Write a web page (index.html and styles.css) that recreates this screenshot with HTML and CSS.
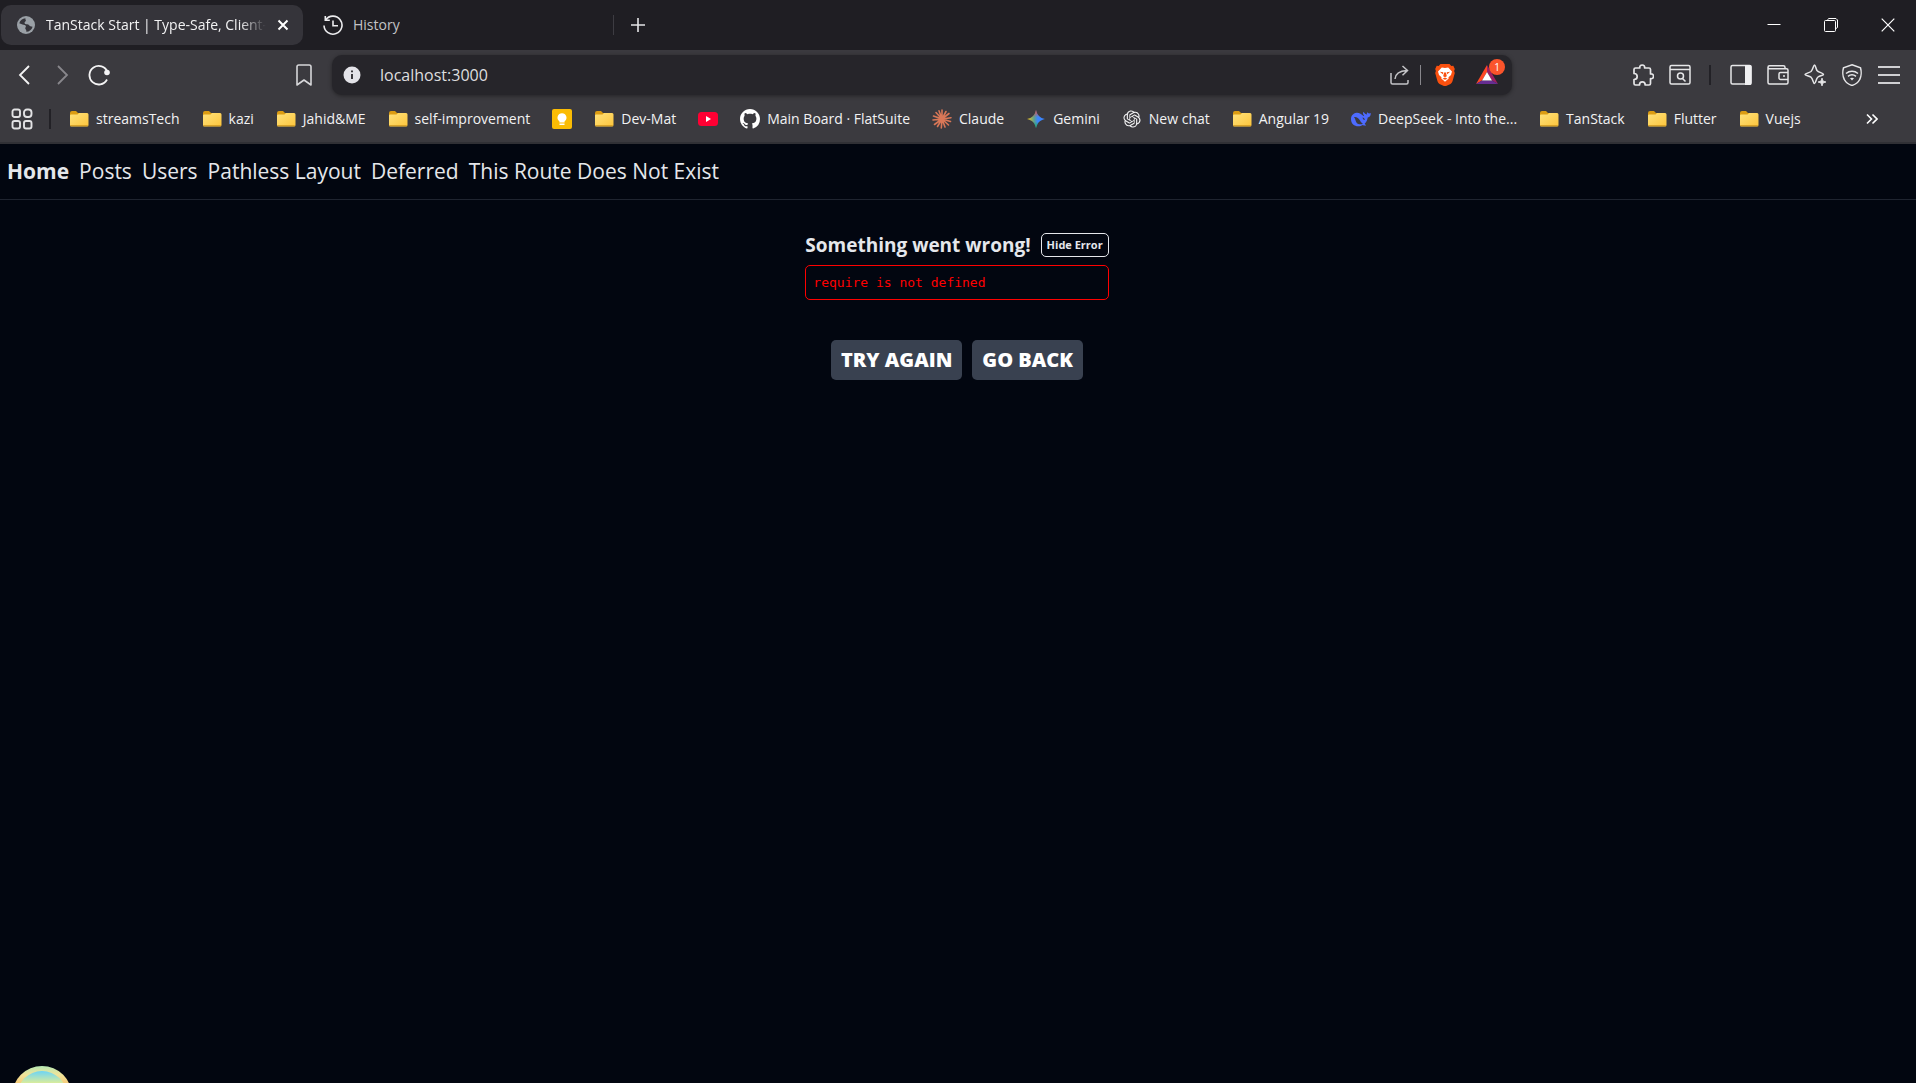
FILE: index.html
```html
<!DOCTYPE html>
<html lang="en">
<head>
<meta charset="utf-8">
<meta name="viewport" content="width=device-width, initial-scale=1">
<title>TanStack Start | Type-Safe, Client</title>
<link rel="stylesheet" href="styles.css">
</head>
<body>
<svg class="defs" aria-hidden="true">
  <defs>
    <linearGradient id="folder-front" x1="0" y1="0" x2="1" y2="1"><stop offset="0" stop-color="#ffe27c"/><stop offset="1" stop-color="#fcc53c"/></linearGradient>
    <linearGradient id="gem-a" x1="0" y1="0.5" x2="1" y2="0.5"><stop offset="0" stop-color="#f9c513"/><stop offset="0.4" stop-color="#5d9f8f"/><stop offset="0.6" stop-color="#3b86ff"/><stop offset="1" stop-color="#3b86ff"/></linearGradient>
    <linearGradient id="gem-b" x1="0.5" y1="0" x2="0.5" y2="1"><stop offset="0" stop-color="#f5483c"/><stop offset="0.4" stop-color="#f5483c" stop-opacity="0"/><stop offset="0.65" stop-color="#13b35a" stop-opacity="0"/><stop offset="1" stop-color="#13b35a"/></linearGradient>
    <symbol id="folder" viewBox="0 0 20 20">
      <path d="M1 4a2 2 0 0 1 2-2h4l2 2h8a2 2 0 0 1 2 2v5H1z" fill="#dc9c12"/>
      <path d="M1 6.500a1 1 0 0 1 1-1h6.500l1.500-1.500h8a1.500 1.500 0 0 1 1.500 1.500V16a1.500 1.500 0 0 1-1.500 1.500H2.500A1.500 1.500 0 0 1 1 16z" fill="url(#folder-front)"/>
      <path d="M1.200 16.700h17.600" stroke="#cf981f" stroke-width="1"/>
    </symbol>
  </defs>
</svg>

<header class="browser">
  <div class="tabs">
    <div class="tab tab-active">
      <svg class="i18" viewBox="0 0 18 18"><circle cx="9" cy="9" r="9" fill="#9aa0a6"/><path d="M8.500 2.200C5.500 2.300 3 4.300 2.300 7.300l3.200 1.200c1.500.5 2.800.2 3.300 1.500.4 1-.8 1.500-.5 2.800.2.900 1 .8 1 1.700v1.300c3-.1 5.600-2.200 6.300-5.100l-2.200-.4c-1-.2-.9-1.400-2.200-1.800-1.500-.4-3-.1-3.600-1.300-.6-1.300 1.300-1.600 1.300-2.700 0-.8-.9-.9-.4-2.300z" fill="#35343a"/></svg>
      <span class="tab-title fade">TanStack Start | Type-Safe, Client-</span>
      <button class="tab-close" aria-label="Close tab"><svg class="i12" viewBox="0 0 12 12"><path d="M1.500 1.500l9 9M10.500 1.500l-9 9" stroke="#fff" stroke-width="2"/></svg></button>
    </div>
    <div class="tab tab-idle">
      <svg class="i20" viewBox="0 0 20 20" fill="none" stroke="#ececee" stroke-width="1.600"><path d="M2.600 5A9 9 0 1 1 1 10.500M2.300 1v4.300h4.500M10 5.500v5.300h5"/></svg>
      <span class="tab-title">History</span>
    </div>
    <button class="new-tab" aria-label="New tab"><svg class="i14" viewBox="0 0 14 14"><path d="M7 0v14M0 7h14" stroke="#e4e4e6" stroke-width="1.600"/></svg></button>
    <div class="window-controls">
      <button aria-label="Minimize"><svg class="i14" viewBox="0 0 14 14"><path d="M.5 6.500h13" stroke="#fff" stroke-width="1"/></svg></button>
      <button aria-label="Restore"><svg class="i14" viewBox="0 0 14 14" fill="none" stroke="#fff"><path d="M3.500 1.500 5 .5h7l1.500 1.500v7.500l-1.500 1"/><rect x=".5" y="2.500" width="11" height="11" rx="1"/></svg></button>
      <button aria-label="Close"><svg class="i14" viewBox="0 0 14 14"><path d="M.7.700l12.600 12.600M13.300.700.7 13.300" stroke="#fff" stroke-width="1.200"/></svg></button>
    </div>
  </div>

  <div class="toolbar">
    <div class="nav-tools">
      <button aria-label="Back"><svg class="i20" viewBox="0 0 20 20" fill="none" stroke="#f4f4f5" stroke-width="1.800"><path d="M14 1 5 10l9 9"/></svg></button>
      <button aria-label="Forward"><svg class="i20" viewBox="0 0 20 20" fill="none" stroke="#88878c" stroke-width="1.800"><path d="m6 1 9 9-9 9"/></svg></button>
      <button aria-label="Reload"><svg class="i22" viewBox="0 0 22 22" fill="none"><path d="M19 15.500A9.300 9.300 0 1 1 19.500 8" stroke="#f4f4f5" stroke-width="1.800"/><circle cx="19" cy="8.500" r="2.800" fill="#f4f4f5"/></svg></button>
      <button class="save" aria-label="Bookmark this page"><svg class="i22" viewBox="0 0 22 22" fill="none" stroke="#d6d6d9" stroke-width="1.600" stroke-linejoin="round"><path d="M4 2.800A1.800 1.800 0 0 1 5.800 1h10.400A1.800 1.800 0 0 1 18 2.800V21l-7-5-7 5z"/></svg></button>
    </div>
    <div class="address">
      <svg class="i18" viewBox="0 0 18 18"><circle cx="9" cy="9" r="8.500" fill="#e3e3e8"/><path d="M9 8v5M9 4.500v1.800" stroke="#26252a" stroke-width="1.800"/></svg>
      <input type="text" aria-label="Address" value="localhost:3000">
      <button aria-label="Share"><svg class="i20" viewBox="0 0 20 20" fill="none" stroke="#c4c4c7" stroke-width="1.500"><path d="M1 8v9.500A1.500 1.500 0 0 0 2.500 19h14a1.500 1.500 0 0 0 1.500-1.500V15M5 14c.3-5 4-8 12-8.500M12.500 1l5 4.500-5 4.700"/></svg></button>
      <span class="address-line"></span>
      <button class="shield" aria-label="Brave Shields"><svg class="i22" viewBox="0 0 22 22"><path d="M6.500 0h9l1.800 2 2-.2 1.500 3.200-.7 2 .7 2-2.300 8.300a5 5 0 0 1-2 2.700L11 22.500 5.500 20a5 5 0 0 1-2-2.700L1.200 9l.7-2-.7-2 1.500-3.200 2 .2z" fill="#f9500f"/><path d="m11 4 3.200-.5L18 7.500l-1 3.500-2.500 2.200.2 1.300-3.700 3.200-3.700-3.200.2-1.300L5 11 4 7.500l3.800-4z" fill="#fff"/><path d="m5.800 7.700 3.500.6-.5 2zM16.200 7.700l-3.500.6.500 2zM10 8.500h2l.8 3.700L11 13.300l-1.800-1.100zM8.500 14.800l2.500-1.400 2.500 1.400-2.500 1z" fill="#f9500f"/></svg></button>
      <button class="rewards" aria-label="Brave Rewards, 1 new"><svg class="i22" viewBox="0 0 22 22"><path d="M11 1 0 20l6-3.500L11 8z" fill="#ff4724"/><path d="m11 1 11 19-6-3.500L11 8z" fill="#9e1f63"/><path d="M0 20h22l-6-3.500H6z" fill="#662d91"/><path d="m11 8 5 8.500H6z" fill="#fff"/></svg><span class="badge">1</span></button>
    </div>
    <div class="tools">
      <button aria-label="Extensions"><svg class="i22" viewBox="0 0 22 22" fill="none" stroke="#e6e6e8" stroke-width="1.700" stroke-linejoin="round"><path d="M3.500 4h4.300C7.500 2 8.500 1 10.200 1s2.700 1 2.400 3H17a1.500 1.500 0 0 1 1.500 1.500V10c2-.3 3 .7 3 2.300s-1 2.700-3 2.400v4.800A1.500 1.500 0 0 1 17 21h-3.800c0-2.200-1.200-3.200-2.900-3.200S7.500 18.800 7.500 21h-4A1.500 1.500 0 0 1 2 19.500v-4c2.200 0 3.200-1.300 3.200-3s-1-3-3.200-3v-4A1.500 1.500 0 0 1 3.500 4z"/></svg></button>
      <button aria-label="Search tabs"><svg class="i22" viewBox="0 0 22 22" fill="none" stroke="#e6e6e8" stroke-width="1.500"><rect x="1" y="1.500" width="20" height="18.500" rx="1.500"/><path d="M1 5.500h20M13.500 14.500l3 3"/><circle cx="11.500" cy="12" r="3"/></svg></button>
      <span class="divider"></span>
      <button aria-label="Sidebar"><svg class="i22" viewBox="0 0 22 22"><rect x="1" y="1.500" width="20" height="18.500" rx="1.500" fill="none" stroke="#e6e6e8" stroke-width="1.500"/><path d="M15 1h5a1.500 1.500 0 0 1 1.500 1.500v17a1.500 1.500 0 0 1-1.500 1.500h-5z" fill="#f0f0f2"/></svg></button>
      <button aria-label="Wallet"><svg class="i22" viewBox="0 0 22 22" fill="none" stroke="#e6e6e8" stroke-width="1.500"><path d="M18 4.500V3.300A1.600 1.600 0 0 0 16.400 1.700H2.500A1.500 1.500 0 0 0 1 3.200v15.300A1.500 1.500 0 0 0 2.500 20h17a1.500 1.500 0 0 0 1.500-1.500V6.300a1.500 1.500 0 0 0-1.500-1.500H2.500A1.500 1.500 0 0 1 1 3.300M21 8.500h-7.500a1.500 1.500 0 0 0-1.500 1.500v4a1.500 1.500 0 0 0 1.500 1.500H21M16 12h2"/></svg></button>
      <button aria-label="Leo AI"><svg class="i22" viewBox="0 0 22 22" fill="none" stroke="#e6e6e8" stroke-width="1.500" stroke-linejoin="round"><path d="M10.500 1c1 0 1.300 3.500 2.500 5.500 1.500 2 6.500 2.500 6.500 4 0 .8-3.500 1-5.500 2.500-2 1.500-2.300 6.500-3.500 6.500S9 15 7 13.200C5 11.800 1 11.500 1 10.500S5 9 7 7.500C9 5.500 9.500 1 10.500 1z"/><path d="m18 14 1 3 3 1-3 1-1 3-1-3-3-1 3-1z" fill="#e6e6e8" stroke-width=".8"/></svg></button>
      <button aria-label="VPN"><svg class="i22" viewBox="0 0 22 22" fill="none" stroke="#e6e6e8" stroke-width="1.500"><path d="m11 .8 8.500 3c1 3.500.8 9-.8 11.700-1.500 2.800-5 5.200-7.700 6-2.700-.8-6.200-3.200-7.700-6C1.700 12.800 1.500 7.300 2.500 3.800z"/><path d="M5 9.500c3.500-3 8.500-3 12 0M7 12.300c2.500-2 5.500-2 8 0"/><path d="M11 16.500l-2-2.200c1.200-.9 2.800-.9 4 0z" fill="#e6e6e8" stroke="none"/></svg></button>
      <button aria-label="Menu"><svg class="i22" viewBox="0 0 22 22" stroke="#d0d0d3" stroke-width="2"><path d="M0 3h22M0 11h22M0 19h22"/></svg></button>
    </div>
  </div>

  <nav class="bookmarks" aria-label="Bookmarks">
    <button class="apps" aria-label="All bookmarks"><svg class="i22" viewBox="0 0 22 22" fill="none" stroke="#e2e2e4" stroke-width="1.900"><rect x="1.500" y="1.500" width="7.500" height="7.500" rx="2"/><rect x="13" y="1.500" width="7.500" height="7.500" rx="3"/><rect x="1.500" y="13" width="7.500" height="7.500" rx="2"/><rect x="13" y="13" width="7.500" height="7.500" rx="2"/></svg></button>
    <span class="divider"></span>
    <div class="links">
      <a href="#"><svg class="i20"><use href="#folder"/></svg>streamsTech</a>
      <a href="#"><svg class="i20"><use href="#folder"/></svg>kazi</a>
      <a href="#"><svg class="i20"><use href="#folder"/></svg>Jahid&amp;ME</a>
      <a href="#"><svg class="i20"><use href="#folder"/></svg>self-improvement</a>
      <a href="#" aria-label="Google Keep"><svg class="i20" viewBox="0 0 20 20"><rect width="20" height="20" rx="2" fill="#fbbc04"/><path d="M10 4.200a4.400 4.400 0 0 0-2.600 8V13.500h5.200v-1.300a4.400 4.400 0 0 0-2.600-8zM7.500 14.500h5V16h-5z" fill="#fff"/></svg></a>
      <a href="#"><svg class="i20"><use href="#folder"/></svg>Dev-Mat</a>
      <a href="#" aria-label="YouTube"><svg class="i20" viewBox="0 0 20 20"><rect y="3" width="20" height="14" rx="3.500" fill="#ff0033"/><path d="m8 7 5 3-5 3z" fill="#fff"/></svg></a>
      <a href="#"><svg class="i20" viewBox="0 0 16 16"><path fill="#fff" d="M8 0C3.580 0 0 3.580 0 8c0 3.540 2.290 6.530 5.470 7.590.4.070.55-.17.55-.38 0-.19-.01-.82-.01-1.490-2.010.37-2.530-.49-2.690-.94-.09-.23-.48-.94-.82-1.130-.28-.15-.68-.52-.01-.53.63-.01 1.080.58 1.230.82.72 1.210 1.870.87 2.330.66.070-.52.28-.87.51-1.070-1.780-.2-3.640-.89-3.640-3.950 0-.87.31-1.590.82-2.150-.08-.2-.36-1.020.08-2.120 0 0 .67-.21 2.200.82.640-.18 1.320-.27 2-.27s1.360.09 2 .27c1.530-1.040 2.200-.82 2.200-.82.440 1.100.160 1.920.080 2.120.510.560.820 1.270.820 2.150 0 3.070-1.870 3.750-3.650 3.950.290.250.540.730.540 1.480 0 1.070-.01 1.930-.01 2.200 0 .210.150.460.550.380A8.010 8.010 0 0 0 16 8c0-4.420-3.580-8-8-8z"/></svg>Main Board · FlatSuite</a>
      <a href="#"><svg class="i20" viewBox="0 0 20 20" stroke="#d97757" stroke-width="1.600" stroke-linecap="round"><path d="M10 10V1M10 10l4-7.500M10 10l7-5.500M10 10l9-1.300M10 10l8.500 2.500M10 10l6.500 6M10 10l3 8M10 10l-.7 9M10 10l-4.500 7.500M10 10l-7.500 5.500M10 10l-9 1M10 10 1.500 7M10 10 4 3.500M10 10 7 1.800"/></svg>Claude</a>
      <a href="#"><svg class="i20" viewBox="0 0 20 20"><path d="M10 1c1 5 4 8 9 9-5 1-8 4-9 9-1-5-4-8-9-9 5-1 8-4 9-9z" fill="url(#gem-a)"/><path d="M10 1c1 5 4 8 9 9-5 1-8 4-9 9-1-5-4-8-9-9 5-1 8-4 9-9z" fill="url(#gem-b)"/></svg>Gemini</a>
      <a href="#"><svg class="i20" viewBox="-2 -2 28 28"><path fill="#f2f2f3" d="M22.2819 9.8211a5.9847 5.9847 0 0 0-.5157-4.9108 6.0462 6.0462 0 0 0-6.5098-2.9A6.0651 6.0651 0 0 0 4.9807 4.1818a5.9847 5.9847 0 0 0-3.9977 2.9 6.0462 6.0462 0 0 0 .7427 7.0966 5.98 5.98 0 0 0 .511 4.9107 6.051 6.051 0 0 0 6.5146 2.9001A5.9847 5.9847 0 0 0 13.2599 24a6.0557 6.0557 0 0 0 5.7718-4.2058 5.9894 5.9894 0 0 0 3.9977-2.9001 6.0557 6.0557 0 0 0-.7475-7.0729zm-9.022 12.6081a4.4755 4.4755 0 0 1-2.8764-1.0408l.1419-.0804 4.7783-2.7582a.7948.7948 0 0 0 .3927-.6813v-6.7369l2.02 1.1686a.071.071 0 0 1 .038.052v5.5826a4.504 4.504 0 0 1-4.4945 4.4944zm-9.6607-4.1254a4.4708 4.4708 0 0 1-.5346-3.0137l.142.0852 4.783 2.7582a.7712.7712 0 0 0 .7806 0l5.8428-3.3685v2.3324a.0804.0804 0 0 1-.0332.0615L9.74 19.9502a4.4992 4.4992 0 0 1-6.1408-1.6464zM2.3408 7.8956a4.485 4.485 0 0 1 2.3655-1.9728V11.6a.7664.7664 0 0 0 .3879.6765l5.8144 3.3543-2.0201 1.1685a.0757.0757 0 0 1-.071 0l-4.8303-2.7865A4.504 4.504 0 0 1 2.3408 7.872zm16.5963 3.8558L13.1038 8.364 15.1192 7.2a.0757.0757 0 0 1 .071 0l4.8303 2.7913a4.4944 4.4944 0 0 1-.6765 8.1042v-5.6772a.79.79 0 0 0-.407-.667zm2.0107-3.0231l-.142-.0852-4.7735-2.7818a.7759.7759 0 0 0-.7854 0L9.409 9.2297V6.8974a.0662.0662 0 0 1 .0284-.0615l4.8303-2.7866a4.4992 4.4992 0 0 1 6.6802 4.66zM8.3065 12.863l-2.02-1.1638a.0804.0804 0 0 1-.038-.0567V6.0742a4.4992 4.4992 0 0 1 7.3757-3.4537l-.142.0805L8.704 5.459a.7948.7948 0 0 0-.3927.6813zm1.0976-2.3654l2.602-1.4998 2.6069 1.4998v2.9994l-2.5974 1.4997-2.6067-1.4997Z"/></svg>New chat</a>
      <a href="#"><svg class="i20"><use href="#folder"/></svg>Angular 19</a>
      <a href="#"><svg class="i20" viewBox="0 0 20 20"><path d="M19.700 4c-1.500.8-2.500.5-3.600-.7-.4.900-.3 1.500.2 2.200-1.500-.2-3-1.300-3.800-2.800-.9 1.300-.5 2.700.7 3.800l-.8.500C10.500 5.200 8 3.500 5.500 3.800 2 4.300 0 7 0 10.200 0 14.500 3.300 17.300 7.200 17.300c1.800 0 3.200-.5 4.500-1.400 1.200.7 2.600.9 3.300.5.500-.4-.8-.6-1.300-1.700 1.900-2 2.800-4 3-6.200C19 8.200 20 6.200 19.700 4z" fill="#4d6bfe"/><path d="M3 8c2.500-.5 4.500 1 6 3.500 1 1.800 1.800 2.800 3 3.200-2 .9-4.500.9-6-.5C4.500 12.700 4.500 10 3 8zM11.500 8.500c1.300.2 2.200 1 2.300 2.500-1.200.2-2-.8-2.300-2.500z" fill="#3b3a3f"/><path d="M8 8.500c1.500-1 3.500.2 4.200 2.500l.8 2-2-1z" fill="#4d6bfe"/></svg>DeepSeek - Into the...</a>
      <a href="#"><svg class="i20"><use href="#folder"/></svg>TanStack</a>
      <a href="#"><svg class="i20"><use href="#folder"/></svg>Flutter</a>
      <a href="#"><svg class="i20"><use href="#folder"/></svg>Vuejs</a>
    </div>
    <button class="more" aria-label="More bookmarks"><svg class="i12" viewBox="0 0 12 12" fill="none" stroke="#fff" stroke-width="1.600"><path d="m1 1.500 4.500 4.500L1 10.500M6.500 1.500 11 6l-4.500 4.500"/></svg></button>
  </nav>
</header>

<nav class="site-nav">
  <a class="current" href="#">Home</a>
  <a href="#">Posts</a>
  <a href="#">Users</a>
  <a href="#">Pathless Layout</a>
  <a href="#">Deferred</a>
  <a href="#">This Route Does Not Exist</a>
</nav>

<main class="content">
  <section class="error">
    <div class="error-head">
      <strong>Something went wrong!</strong>
      <button class="toggle">Hide Error</button>
    </div>
    <pre class="error-message"><code>require is not defined</code></pre>
  </section>
  <div class="actions">
    <button>TRY AGAIN</button>
    <a href="#">GO BACK</a>
  </div>
</main>

<button class="devtools" aria-label="Open TanStack Router Devtools"><span></span></button>
</body>
</html>
```
FILE: styles.css
```css
* {
  box-sizing: border-box;
}

body {
  margin: 0;
  min-height: 100vh;
  overflow: hidden;
  background: #020610;
  color: #e5e7eb;
  font-family: "Open Sans", "Noto Sans", sans-serif;
}

button {
  margin: 0;
  padding: 0;
  border: 0;
  background: none;
  color: inherit;
  font: inherit;
}

a {
  color: inherit;
  text-decoration: none;
}

svg {
  display: block;
  flex: none;
}

.defs {
  position: absolute;
  width: 0;
  height: 0;
}

.i12 { width: 12px; height: 12px; }
.i14 { width: 14px; height: 14px; }
.i18 { width: 18px; height: 18px; }
.i20 { width: 20px; height: 20px; }
.i22 { width: 22px; height: 22px; }

/* Browser frame */
.browser {
  background: #3b3a3f;
  border-bottom: 2px solid #303035;
  color: #f2f2f3;
  font-size: 14px;
  line-height: 20px;
}

.tabs {
  display: flex;
  align-items: center;
  height: 50px;
  padding-left: 1px;
  background: #1f1e23;
}

.tab {
  display: flex;
  align-items: center;
  height: 40px;
}

.tab-active {
  width: 302px;
  padding: 0 14px 0 16px;
  gap: 11px;
  border-radius: 10px;
  background: #35343a;
}

.tab-idle {
  width: 311px;
  height: 20px;
  padding-left: 20px;
  gap: 10px;
  border-right: 1px solid #3d3c42;
  color: #c3c3c6;
}

.tab-title {
  overflow: hidden;
  white-space: nowrap;
}

.fade {
  flex: 1;
  mask-image: linear-gradient(to right, #000 88%, transparent);
}

.tab-close,
.new-tab,
.window-controls button,
.toolbar button {
  display: grid;
  place-items: center;
}

.new-tab {
  width: 48px;
  height: 40px;
}

.window-controls {
  display: flex;
  margin-left: auto;
}

.window-controls button {
  width: 57px;
  height: 50px;
}

.toolbar {
  display: flex;
  align-items: center;
  height: 50px;
  padding: 0 9px 0 6px;
}

.toolbar button {
  width: 37px;
  height: 40px;
}

.nav-tools {
  display: flex;
  width: 316px;
}

.nav-tools .save {
  margin-left: auto;
}

.address {
  display: flex;
  align-items: center;
  flex: 1;
  height: 40px;
  margin: 0 112px 0 10px;
  padding: 0 4px 0 11px;
  border-radius: 10px;
  background: #26252a;
  box-shadow: 0 1px 4px #00000066;
}

.address input {
  flex: 1;
  min-width: 0;
  padding: 0 0 0 19px;
  border: 0;
  outline: 0;
  background: none;
  color: #dededf;
  font: inherit;
  font-size: 16px;
}

.address-line {
  width: 1px;
  height: 20px;
  margin: 0 3px 0 2px;
  background: #88878c;
}

.toolbar .shield {
  width: 42px;
}

.toolbar .rewards {
  position: relative;
  width: 42px;
}

.badge {
  position: absolute;
  top: 4px;
  right: 3px;
  width: 16px;
  height: 16px;
  border-radius: 8px;
  background: #fb542b;
  color: #fff;
  font-size: 10px;
  line-height: 16px;
  text-align: center;
}

.tools {
  display: flex;
  align-items: center;
}

.divider {
  width: 2px;
  height: 20px;
  margin: 0 11px;
  background: #222126;
}

.bookmarks {
  display: flex;
  align-items: center;
  height: 42px;
  padding: 0 38px 4px 11px;
}

.bookmarks .divider {
  margin: 0 18px 0 16px;
}

.links {
  display: flex;
  flex: 1;
  min-width: 0;
  gap: 22px;
  overflow: hidden;
}

.links a {
  display: flex;
  align-items: center;
  gap: 7px;
  white-space: nowrap;
}

/* Page */
.site-nav {
  display: flex;
  flex-wrap: wrap;
  gap: 10px;
  padding: 10px 7px;
  border-bottom: 1px solid #1f2430;
  font-size: 21px;
  line-height: 35px;
}

.current {
  font-weight: 700;
}

.content {
  display: flex;
  flex-direction: column;
  align-items: center;
  gap: 40px;
  padding: 33px 22px 20px 20px;
}

.error-head {
  display: flex;
  align-items: center;
  gap: 10px;
}

.error-head strong {
  font-size: 19px;
  line-height: 24px;
}

.toggle {
  height: 24px;
  padding: 0 5px;
  border: 1px solid #e5e7eb;
  border-radius: 5px;
  font-size: 11px;
  font-weight: 700;
  line-height: 22px;
}

.error-message {
  margin: 8px 0 0;
  padding: 7px;
  border: 1px solid #f00;
  border-radius: 5px;
  color: #f00;
  font-size: 13px;
  line-height: 19px;
}

.error-message code {
  font-family: "DejaVu Sans Mono", monospace;
}

.actions {
  display: flex;
  gap: 10px;
}

.actions button,
.actions a {
  padding: 5px 10px;
  border-radius: 5px;
  background: #394150;
  color: #fff;
  font-size: 20px;
  font-weight: 800;
  line-height: 30px;
}

.devtools {
  position: fixed;
  bottom: -43px;
  left: 12px;
  width: 60px;
  height: 60px;
  padding: 5px;
  border-radius: 50%;
  background: linear-gradient(#b5e8b4, #f2e399 15%, #f6c977 30%, #f0a060);
}

.devtools span {
  display: block;
  height: 50px;
  border-radius: 50%;
  background: linear-gradient(#6cd4f5, #d9ec9c 24%, #ffe98a);
}
```
